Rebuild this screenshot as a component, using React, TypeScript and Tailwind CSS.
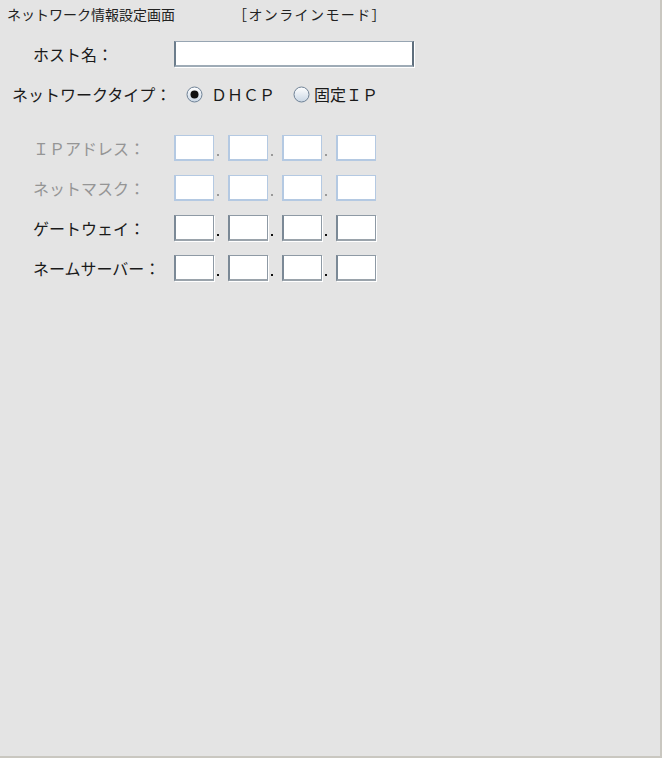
import React from 'react'

const font = { fontFamily: '"Noto Sans CJK JP", "Noto Sans", sans-serif' }

type OctetsProps = {
  disabled?: boolean;
}

const Octets = ({ disabled }: OctetsProps) => {
  const box = disabled
    ? 'w-[40px] h-[26px] bg-white border border-[#b4c9e2] border-l-2 border-b-2'
    : 'w-[40px] h-[26px] bg-white border border-[#8e9aa5] border-l-2 border-l-[#7b8996] border-b-2 border-b-[#9aa3ab] shadow-[1px_1px_0_#ffffff]'
  const dot = disabled ? 'bg-[#9a9a9a]' : 'bg-[#111111]'
  return (
    <div className="flex items-end">
      {[0, 1, 2, 3].map((i) => (
        <div key={i} className="flex items-end">
          <div className={box}></div>
          {i < 3 && (
            <div className="w-[14px] h-[26px] flex items-end">
              <div className={`ml-[3px] mb-[5px] w-[2px] h-[2px] ${dot}`}></div>
            </div>
          )}
        </div>
      ))}
    </div>
  )
}

const Radio = ({ checked }: { checked?: boolean }) => (
  <svg width="17" height="17" viewBox="0 0 17 17">
    <defs>
      <linearGradient id={checked ? 'rg1' : 'rg2'} x1="0" y1="0" x2="0" y2="1">
        <stop offset="0" stopColor="#ffffff" />
        <stop offset="1" stopColor="#c9d6e4" />
      </linearGradient>
    </defs>
    <circle cx="8.5" cy="8.5" r="7.5" fill={`url(#${checked ? 'rg1' : 'rg2'})`} stroke="#6f8296" strokeWidth="1" />
    {checked && <circle cx="8.5" cy="8.5" r="4" fill="#111111" />}
  </svg>
)

const App = () => {
  const rows = [
    { label: 'ＩＰアドレス：', disabled: true },
    { label: 'ネットマスク：', disabled: true },
    { label: 'ゲートウェイ：', disabled: false },
    { label: 'ネームサーバー：', disabled: false },
  ]

  return (
    <div className="w-[662px] h-[758px] bg-[#e4e4e4] border-r-2 border-b-2 border-[#c9c7c0] overflow-hidden" style={font}>
      <div className="flex items-center h-[16px] mt-[6px] pl-[7px] text-[14px] leading-none text-[#222222]">
        <span>ネットワーク情報設定画面</span>
        <span className="ml-[58px] tracking-[1.4px]">［オンラインモード］</span>
      </div>

      <div className="flex items-center mt-[19px] h-[26px]">
        <span className="w-[174px] pl-[33px] text-[16px] leading-none text-[#1a1a1a]">ホスト名：</span>
        <div className="w-[240px] h-[26px] bg-white border border-[#97a5b2] border-l-2 border-l-[#6c7d8c] border-r-2 border-r-[#5f6f7d] border-b-2 border-b-[#9eabb6] shadow-[1px_1px_0_#ffffff]"></div>
      </div>

      <div className="flex items-center mt-[17px] h-[20px] text-[16px] leading-none text-[#1a1a1a]">
        <span className="w-[174px] pl-[12px]">ネットワークタイプ：</span>
        <div className="flex items-center ml-[12px]">
          <Radio checked />
          <span className="ml-[8px]">ＤＨＣＰ</span>
        </div>
        <div className="flex items-center ml-[18px]">
          <Radio />
          <span className="ml-[4px]">固定ＩＰ</span>
        </div>
      </div>

      <div className="flex flex-col gap-[14px] mt-[31px]">
        {rows.map((r) => (
          <div key={r.label} className="flex items-center h-[26px]">
            <span className={`w-[174px] pl-[33px] text-[16px] leading-none ${r.disabled ? 'text-[#959595]' : 'text-[#1a1a1a]'}`}>
              {r.label}
            </span>
            <Octets disabled={r.disabled} />
          </div>
        ))}
      </div>
    </div>
  )
}

export default App
